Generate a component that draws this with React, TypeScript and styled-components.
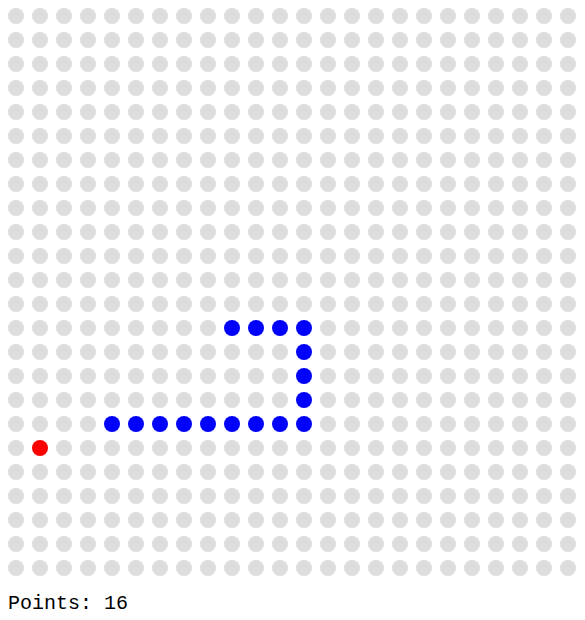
import styled, {createGlobalStyle} from 'styled-components'

const GlobalStyle = createGlobalStyle`
  body {
    margin: 8px;
    background: #fff;
  }
`

const SIZE = 24

const snake: Array<[number, number]> = [
  [13, 9], [13, 10], [13, 11], [13, 12],
  [14, 12], [15, 12], [16, 12],
  [17, 12], [17, 11], [17, 10], [17, 9], [17, 8], [17, 7], [17, 6], [17, 5], [17, 4],
]
const food: [number, number] = [18, 1]

type Kind = 'empty' | 'snake' | 'food'

const Board = styled.div`
  display: grid;
  grid-template-columns: repeat(${SIZE}, 16px);
  grid-auto-rows: 16px;
  gap: 8px;
  width: max-content;
`

const colors: Record<Kind, string> = {
  empty: '#dddddd',
  snake: '#0000ff',
  food: '#ff0000',
}

const Cell = styled.div<{$kind: Kind}>`
  width: 16px;
  height: 16px;
  border-radius: 50%;
  background-color: ${p => colors[p.$kind]};
`

const Score = styled.div`
  margin-top: 16px;
  font-family: 'Liberation Mono', 'Courier New', monospace;
  font-size: 20px;
  color: #000;
`

const App = () => {
  const cells: Kind[] = []
  for (let r = 0; r < SIZE; r++) {
    for (let c = 0; c < SIZE; c++) {
      let kind: Kind = 'empty'
      if (snake.some(([sr, sc]) => sr === r && sc === c)) kind = 'snake'
      else if (food[0] === r && food[1] === c) kind = 'food'
      cells.push(kind)
    }
  }

  return (
    <>
      <GlobalStyle />
      <Board>
        {cells.map((kind, i) => (
          <Cell key={i} $kind={kind} />
        ))}
      </Board>
      <Score>Points: 16</Score>
    </>
  )
}

export default App
